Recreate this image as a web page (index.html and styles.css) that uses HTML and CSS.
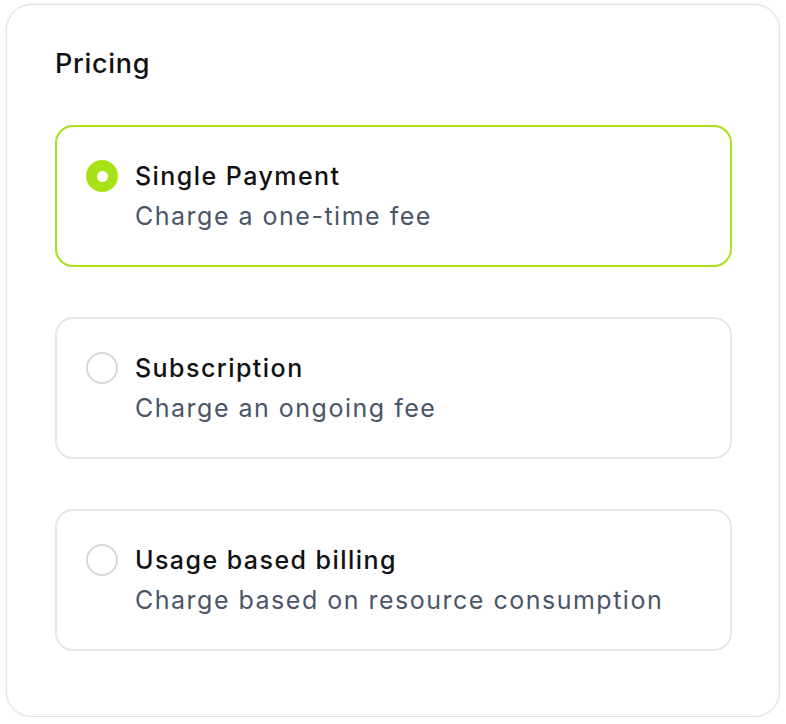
FILE: index.html
```html
<!DOCTYPE html>
<html>
<head>
<meta charset="utf-8">
<link rel="stylesheet" href="styles.css">
</head>
<body>
<div class="card">
  <h2 class="title">Pricing</h2>
  <div class="options">
    <div class="option selected">
      <span class="radio"></span>
      <div class="text">
        <div class="name">Single Payment</div>
        <div class="desc">Charge a one-time fee</div>
      </div>
    </div>
    <div class="option">
      <span class="radio"></span>
      <div class="text">
        <div class="name">Subscription</div>
        <div class="desc">Charge an ongoing fee</div>
      </div>
    </div>
    <div class="option">
      <span class="radio"></span>
      <div class="text">
        <div class="name">Usage based billing</div>
        <div class="desc">Charge based on resource consumption</div>
      </div>
    </div>
  </div>
</div>
</body>
</html>
```
FILE: styles.css
```css
html, body {
  margin: 0;
  padding: 0;
  background: #ffffff;
}
body {
  font-family: Inter, "Noto Sans", sans-serif;
  padding: 4px 0 0 6px;
}
.card {
  box-sizing: border-box;
  width: 774px;
  height: 713px;
  border: 1px solid #e2e2e2;
  border-radius: 26px;
  box-shadow: 0 0 3px rgba(0, 0, 0, 0.1);
  padding: 43px 47px 0 48px;
  background: #fff;
}
.title {
  margin: 0 0 45px 0;
  font-size: 27px;
  line-height: 32px;
  font-weight: 500;
  letter-spacing: 0.7px;
  color: #111111;
}
.options {
  display: flex;
  flex-direction: column;
  gap: 50px;
}
.option {
  box-sizing: border-box;
  height: 142px;
  border: 2px solid #e5e7eb;
  border-radius: 18px;
  padding: 29px 29px;
  display: flex;
  align-items: flex-start;
  gap: 17px;
}
.option.selected {
  border-color: #a6e216;
}
.radio {
  box-sizing: border-box;
  width: 32px;
  height: 32px;
  border-radius: 50%;
  border: 2px solid #d4d7dc;
  margin-top: 4px;
  flex: none;
  display: flex;
  align-items: center;
  justify-content: center;
}
.selected .radio {
  border: none;
  background: #a6e216;
}
.selected .radio::after {
  content: "";
  width: 11px;
  height: 11px;
  border-radius: 50%;
  background: #fff;
}
.name {
  font-size: 25px;
  line-height: 40px;
  font-weight: 500;
  letter-spacing: 1.45px;
  color: #111111;
}
.desc {
  font-size: 25px;
  line-height: 40px;
  font-weight: 400;
  letter-spacing: 1.5px;
  color: #4a5568;
}
```
